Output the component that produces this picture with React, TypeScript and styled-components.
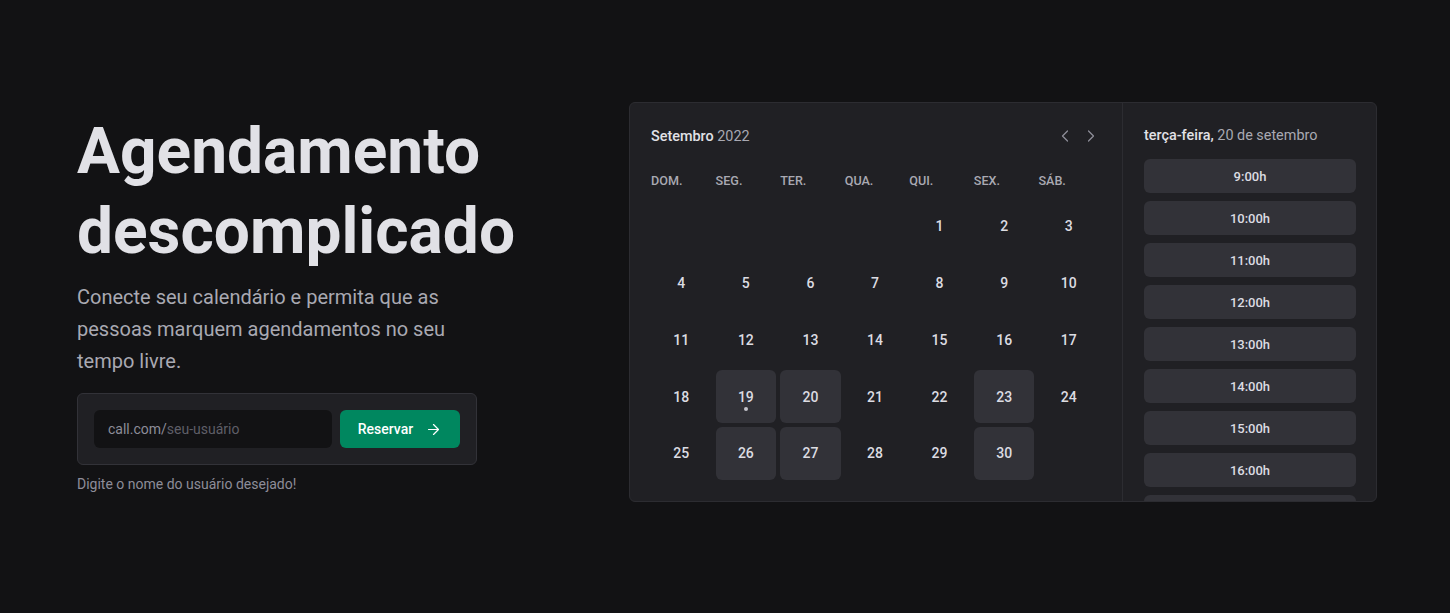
import React from 'react';
import styled, { createGlobalStyle } from 'styled-components';
import { ChevronLeft, ChevronRight, ArrowRight } from 'lucide-react';

const GlobalStyle = createGlobalStyle`
  * { box-sizing: border-box; }
  html, body { margin: 0; padding: 0; background: #121214; }
  body { font-family: Roboto, "Liberation Sans", sans-serif; color: #e1e1e6; -webkit-font-smoothing: antialiased; }
`;

const Container = styled.div`
  height: 100vh;
  display: flex;
  align-items: center;
  justify-content: space-between;
  padding: 0 73px 9px 77px;
`;

const Hero = styled.div`
  width: 480px;
  padding-top: 3px;
  display: flex;
  flex-direction: column;
`;

const Heading = styled.h1`
  margin: 0;
  font-size: 64px;
  line-height: 80px;
  font-weight: 700;
  color: #e1e1e6;
`;

const Lead = styled.p`
  margin: 9px 0 0;
  max-width: 400px;
  font-size: 20px;
  line-height: 32px;
  color: #a9a9b2;
`;

const Form = styled.form`
  margin-top: 16px;
  width: 400px;
  display: flex;
  gap: 8px;
  padding: 16px;
  background: #202024;
  border: 1px solid #323238;
  border-radius: 6px;
`;

const InputBox = styled.div`
  flex: 1;
  height: 38px;
  display: flex;
  align-items: center;
  padding: 0 14px;
  background: #121214;
  border-radius: 6px;
  font-size: 14px;
`;

const Prefix = styled.span`
  color: #8d8d99;
`;

const Placeholder = styled.span`
  color: #5f5f68;
`;

const Button = styled.button`
  width: 120px;
  height: 38px;
  border: 0;
  border-radius: 6px;
  background: #00875f;
  color: #fff;
  font-family: Roboto, "Liberation Sans", sans-serif;
  font-size: 14px;
  font-weight: 500;
  display: flex;
  align-items: center;
  justify-content: center;
  gap: 12px;
  cursor: pointer;
`;

const Note = styled.span`
  margin-top: 8px;
  font-size: 14px;
  line-height: 22px;
  color: #8d8d99;
`;

const Preview = styled.div`
  width: 748px;
  height: 400px;
  display: flex;
  background: #202024;
  border: 1px solid #2c2c31;
  border-radius: 6px;
  overflow: hidden;
`;

const CalendarPane = styled.div`
  width: 492px;
  padding: 21px 0 0 21px;
  display: flex;
  flex-direction: column;
`;

const CalHeader = styled.div`
  width: 448px;
  height: 24px;
  display: flex;
  align-items: center;
  justify-content: space-between;
`;

const Title = styled.span`
  font-size: 14.4px;
  font-weight: 500;
  color: #e1e1e6;
`;

const Muted = styled.span`
  font-weight: 400;
  color: #a9a9b2;
`;

const Arrows = styled.div`
  display: flex;
  gap: 6px;
  color: #8d8d99;
  margin-right: -2px;
`;

const Grid = styled.div`
  margin-top: 21px;
  width: 448px;
  display: grid;
  grid-template-columns: repeat(7, 1fr);
  column-gap: 4px;
  row-gap: 4px;
  grid-template-rows: 27px;
  grid-auto-rows: 52.75px;
`;

const WeekDay = styled.div`
  font-size: 12.6px;
  font-weight: 500;
  color: #a9a9b2;
  line-height: 24px;
`;

const Day = styled.div<{ $available?: boolean }>`
  position: relative;
  display: flex;
  align-items: center;
  justify-content: center;
  font-size: 14px;
  font-weight: 500;
  color: #dcdce2;
  border-radius: 6px;
  background: ${p => (p.$available ? '#323238' : 'transparent')};
`;

const Dot = styled.span`
  position: absolute;
  left: 50%;
  top: 37px;
  width: 4px;
  height: 4px;
  margin-left: -2px;
  border-radius: 50%;
  background: #c4c4cc;
`;

const TimePane = styled.div`
  flex: 1;
  border-left: 1px solid #2c2c31;
  padding: 21px 20px 0 21px;
  display: flex;
  flex-direction: column;
`;

const TimeTitle = styled.div`
  height: 24px;
  line-height: 24px;
  font-size: 14.4px;
  font-weight: 500;
  color: #e1e1e6;
`;

const TimeList = styled.div`
  margin-top: 11px;
  display: flex;
  flex-direction: column;
  gap: 8px;
`;

const TimeItem = styled.div`
  height: 34px;
  flex-shrink: 0;
  border-radius: 6px;
  background: #323238;
  display: flex;
  align-items: center;
  justify-content: center;
  font-size: 13px;
  font-weight: 500;
  color: #dcdce2;
`;

const weekDays = ['DOM.', 'SEG.', 'TER.', 'QUA.', 'QUI.', 'SEX.', 'SÁB.'];
const available = [19, 20, 23, 26, 27, 30];
const times = ['9:00h', '10:00h', '11:00h', '12:00h', '13:00h', '14:00h', '15:00h', '16:00h', '17:00h'];

export default function App() {
  const cells: (number | null)[] = [null, null, null, null];
  for (let d = 1; d <= 30; d++) cells.push(d);

  return (
    <>
      <GlobalStyle />
      <Container>
        <Hero>
          <Heading>Agendamento descomplicado</Heading>
          <Lead>Conecte seu calendário e permita que as pessoas marquem agendamentos no seu tempo livre.</Lead>
          <Form onSubmit={e => e.preventDefault()}>
            <InputBox>
              <Prefix>call.com/</Prefix>
              <Placeholder>seu-usuário</Placeholder>
            </InputBox>
            <Button type="submit">
              Reservar
              <ArrowRight size={17} strokeWidth={1.75} />
            </Button>
          </Form>
          <Note>Digite o nome do usuário desejado!</Note>
        </Hero>
        <Preview>
          <CalendarPane>
            <CalHeader>
              <Title>
                Setembro <Muted>2022</Muted>
              </Title>
              <Arrows>
                <ChevronLeft size={20} strokeWidth={1.5} />
                <ChevronRight size={20} strokeWidth={1.5} />
              </Arrows>
            </CalHeader>
            <Grid>
              {weekDays.map(w => (
                <WeekDay key={w}>{w}</WeekDay>
              ))}
              {cells.map((d, i) => (
                <Day key={i} $available={d !== null && available.includes(d)}>
                  {d}
                  {d === 19 && <Dot />}
                </Day>
              ))}
            </Grid>
          </CalendarPane>
          <TimePane>
            <TimeTitle>
              terça-feira, <Muted>20 de setembro</Muted>
            </TimeTitle>
            <TimeList>
              {times.map(t => (
                <TimeItem key={t}>{t}</TimeItem>
              ))}
            </TimeList>
          </TimePane>
        </Preview>
      </Container>
    </>
  );
}
